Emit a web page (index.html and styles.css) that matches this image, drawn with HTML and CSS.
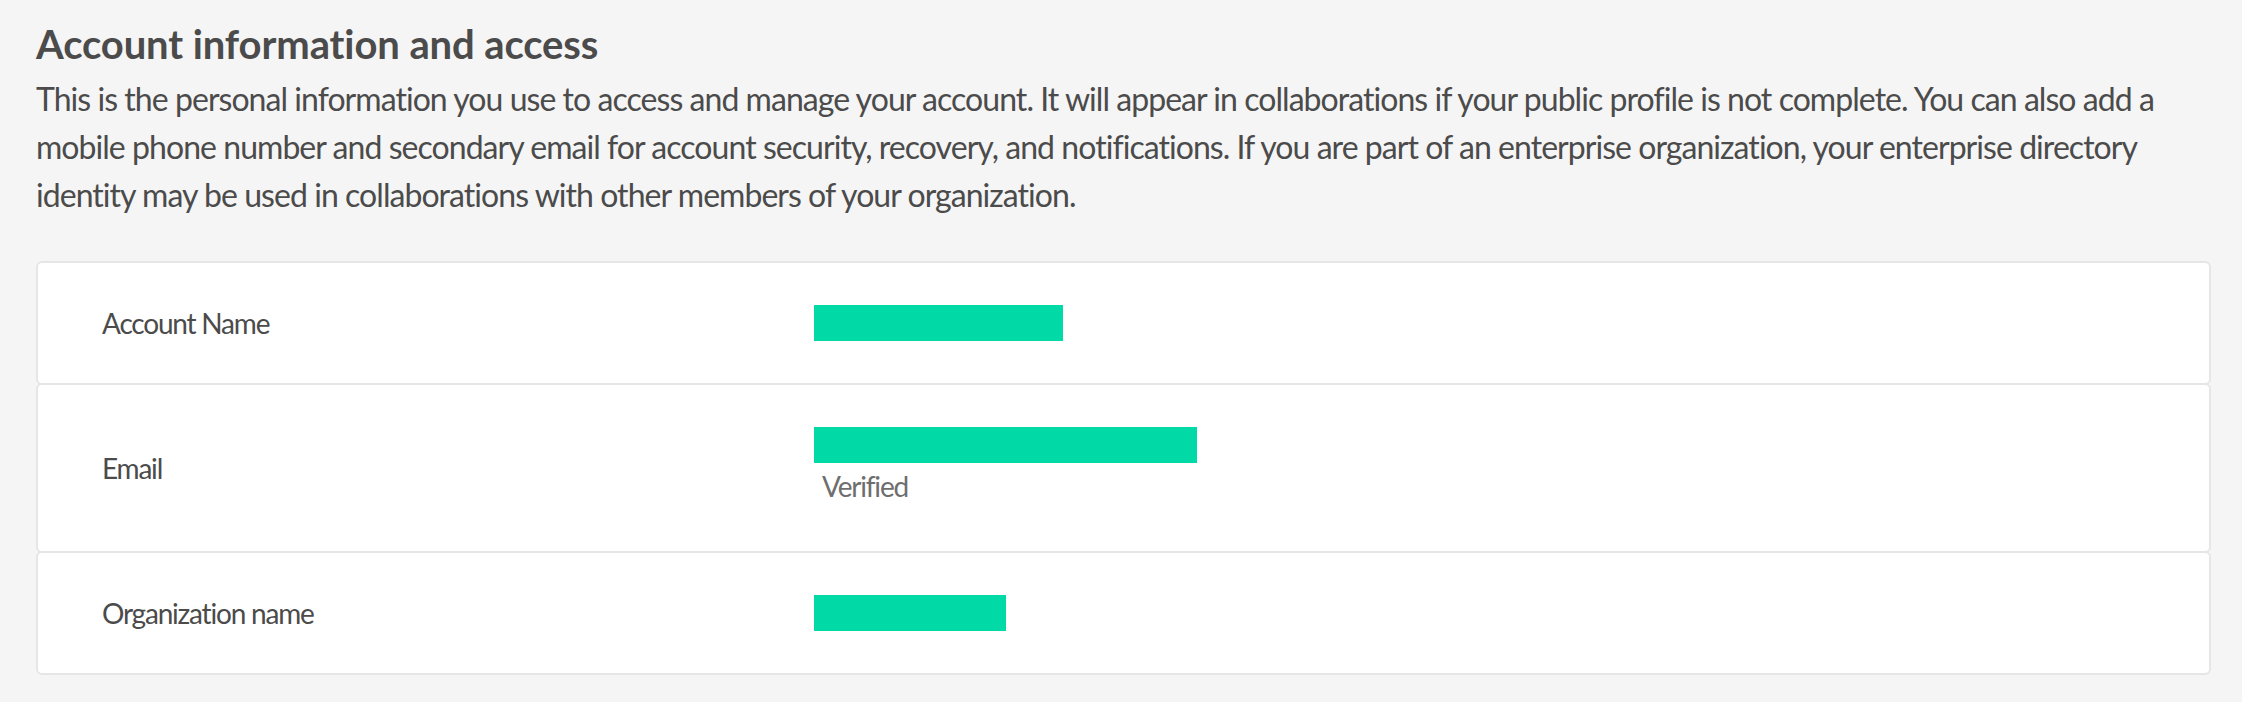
FILE: index.html
```html
<!DOCTYPE html>
<html lang="en">
<head>
<meta charset="utf-8">
<title>Account information and access</title>
<link rel="stylesheet" href="styles.css">
</head>
<body>
<main class="page">
  <h1 class="title">Account information and access</h1>
  <p class="intro">This is the personal information you use to access and manage your account. It will appear in collaborations if your public profile is not complete. You can also add a mobile phone number and secondary email for account security, recovery, and notifications. If you are part of an enterprise organization, your enterprise directory identity may be used in collaborations with other members of your organization.</p>
  <section class="list">
    <div class="row row-short">
      <div class="label">Account Name</div>
      <div class="value"><span class="redact redact-name"></span></div>
    </div>
    <div class="row row-tall">
      <div class="label">Email</div>
      <div class="value">
        <span class="redact redact-email"></span>
        <span class="status">Verified</span>
      </div>
    </div>
    <div class="row row-short">
      <div class="label">Organization name</div>
      <div class="value"><span class="redact redact-org"></span></div>
    </div>
  </section>
</main>
</body>
</html>
```

FILE: styles.css
```css
html, body {
  margin: 0;
  padding: 0;
  background: #f5f5f5;
}
body {
  font-family: Lato, "Liberation Sans", sans-serif;
  color: #4b4b4b;
}
.page {
  padding: 20px 31px 0 36px;
}
.title {
  margin: 0;
  font-size: 40px;
  line-height: 48px;
  font-weight: 700;
  color: #4b4b4b;
  letter-spacing: -0.1px;
}
.intro {
  margin: 7px 0 0;
  font-size: 32px;
  line-height: 48px;
  font-weight: 400;
  letter-spacing: -0.95px;
}
.list {
  margin-top: 42px;
  display: flex;
  flex-direction: column;
}
.row {
  display: grid;
  grid-template-columns: 712px 1fr;
  align-items: center;
  padding-left: 64px;
  background: #fff;
  border: 2px solid #e6e6e6;
  border-radius: 6px;
}
.row + .row {
  margin-top: -2px;
}
.row-short { height: 120px; }
.row-tall { height: 166px; }
.label {
  font-size: 28px;
  line-height: 36px;
  color: #4b4b4b;
  letter-spacing: -1.2px;
}
.value {
  display: flex;
  flex-direction: column;
  align-items: flex-start;
}
.redact {
  display: block;
  height: 36px;
  background: #01d9a6;
}
.redact-name { width: 249px; }
.redact-email { width: 383px; }
.redact-org { width: 192px; }
.status {
  font-size: 28px;
  line-height: 46px;
  color: #6e6e6e;
  padding-left: 8px;
  letter-spacing: -1.2px;
}
```
